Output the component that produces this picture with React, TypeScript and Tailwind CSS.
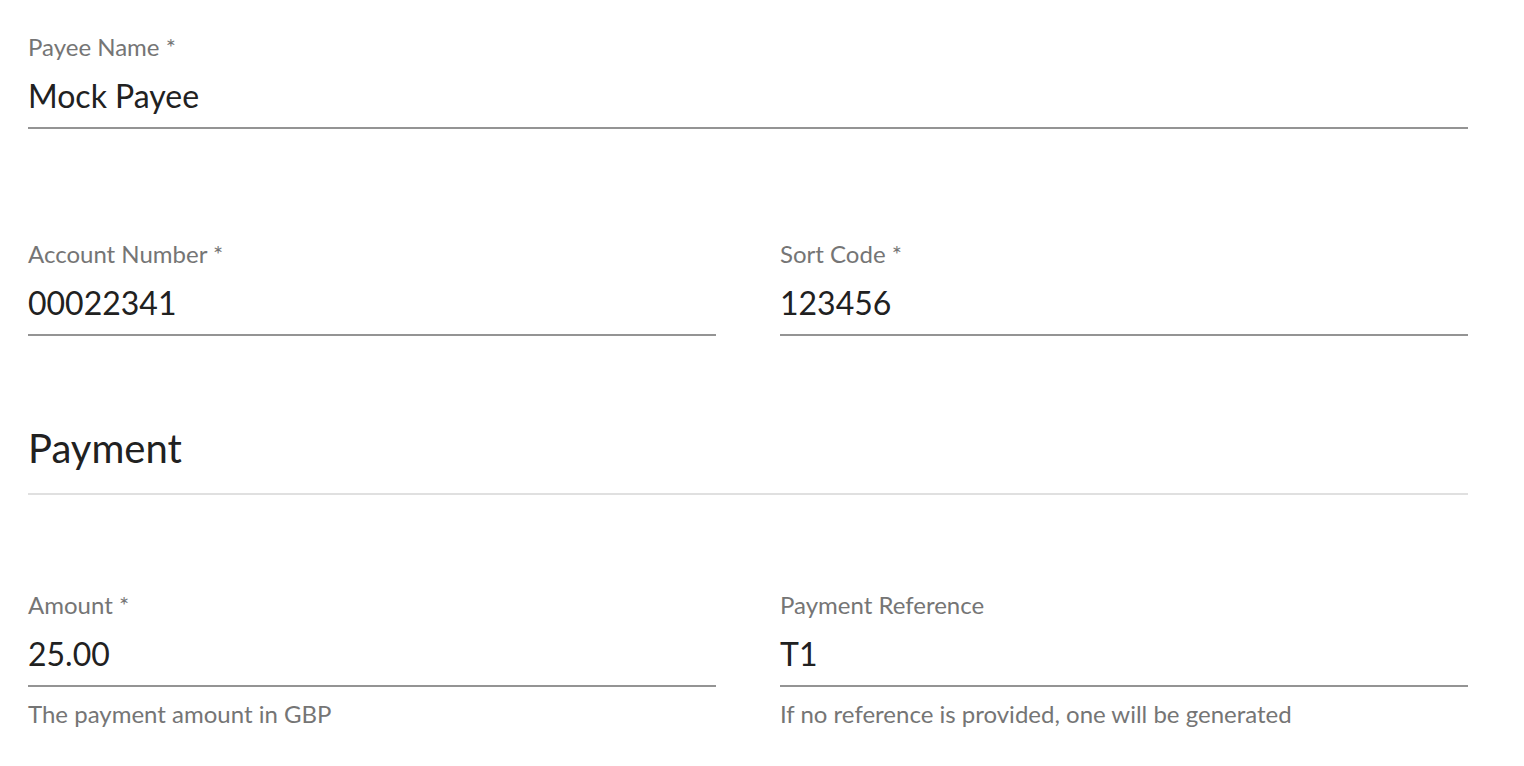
const font = { fontFamily: "Lato, 'Noto Sans', sans-serif" };

type FieldProps = {
  label: string;
  value: string;
  required?: boolean;
  helper?: string;
};

const Field = ({ label, value, required, helper }: FieldProps) => (
  <div className="flex flex-col">
    <label className="text-[24px] leading-[24px] text-[#757575]">
      {label}
      {required && <span> *</span>}
    </label>
    <div className="mt-[18px] border-b-2 border-[#949494] pb-[12px] text-[32px] leading-[38px] text-[#212121]">
      {value}
    </div>
    {helper && (
      <p className="mt-[7px] text-[24px] leading-[40px] text-[#757575]">{helper}</p>
    )}
  </div>
);

export default function App() {
  return (
    <div className="min-h-screen bg-white" style={font}>
      <div className="w-[1440px] ml-[28px] pt-[35px]">
        {/* Payee */}
        <Field label="Payee Name" required value="Mock Payee" />

        <div className="mt-[113px] grid grid-cols-2 gap-x-[64px]">
          <Field label="Account Number" required value="00022341" />
          <Field label="Sort Code" required value="123456" />
        </div>

        {/* Payment section */}
        <h2 className="mt-[88px] text-[40px] leading-[48px] font-normal text-[#212121]">Payment</h2>
        <hr className="mt-[21px] border-0 border-t-2 border-[#e0e0e0]" />

        <div className="mt-[98px] grid grid-cols-2 gap-x-[64px]">
          <Field
            label="Amount"
            required
            value="25.00"
            helper="The payment amount in GBP"
          />
          <Field
            label="Payment Reference"
            value="T1"
            helper="If no reference is provided, one will be generated"
          />
        </div>
      </div>
    </div>
  );
}
